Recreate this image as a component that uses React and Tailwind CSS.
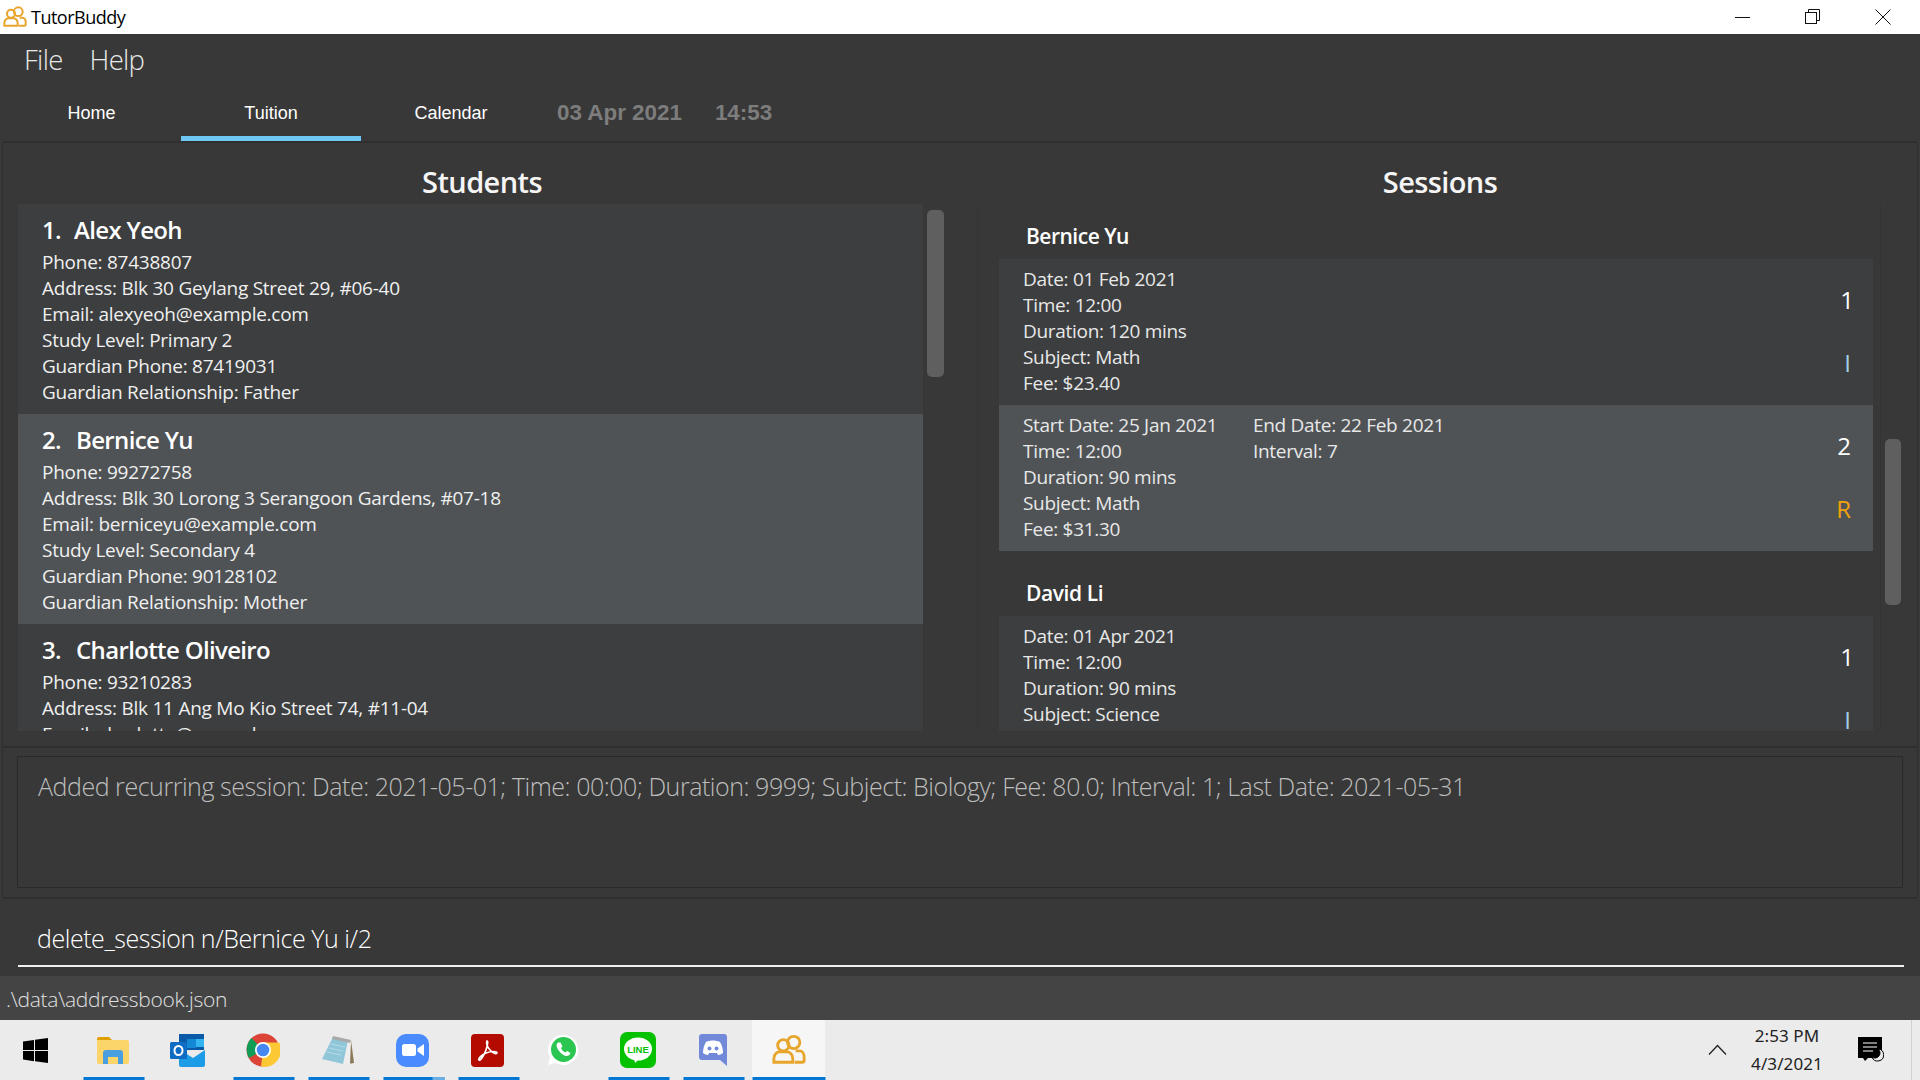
const BASE = "font-['Open_Sans',sans-serif]";

function PeopleIcon({ size = 24 }) {
  return (
    <svg width={size} height={size} viewBox="0 0 36 32" fill="none" stroke="#e8a52c" strokeWidth="3">
      <circle cx="23" cy="8" r="6.500" />
      <circle cx="12" cy="11" r="6" />
      <path d="M2 29v-4c0-4 3-7 6-7h8c3 0 6 3 6 7v4z" />
      <path d="M25 17h4c3 0 5 3 5 6v5c0 1-1 1-2 1h-8" />
    </svg>
  );
}

function StudentCard({ idx, name, lines, selected, numClass }) {
  return (
    <div className={`pl-[24px] pt-[10px] h-[210px] shrink-0 ${selected ? "bg-[#4f5356]" : "bg-[#3c3e3f]"}`}>
      <div className="flex text-[24px] leading-[32px] font-semibold text-white tracking-[-0.65px]">
        <span className={numClass}>{idx}.</span>
        <span>{name}</span>
      </div>
      <div className="text-[19px] leading-[26px] text-[#f0f0f0] tracking-[-0.25px] mt-[3px] whitespace-nowrap">
        {lines.map((l) => (
          <div key={l}>{l}</div>
        ))}
      </div>
    </div>
  );
}

function SessionCard({ n, nClass = "", tag, tagClass, left, right, selected, short }) {
  return (
    <div className={`relative shrink-0 flex pl-[24px] pr-[22px] pt-[7px] ${short ? "h-[130px]" : "h-[146px]"} ${selected ? "bg-[#4f5356]" : "bg-[#3c3e3f]"}`}>
      <div className="text-[19px] leading-[26px] text-[#e8e8e8] tracking-[-0.3px] w-[230px] whitespace-nowrap">
        {left.map((l) => (
          <div key={l}>{l}</div>
        ))}
      </div>
      {right && (
        <div className="text-[19px] leading-[26px] text-[#e8e8e8] tracking-[-0.3px] whitespace-nowrap">
          {right.map((l) => (
            <div key={l}>{l}</div>
          ))}
        </div>
      )}
      <div className="ml-auto flex flex-col items-end">
        <div className={`text-[24px] leading-[32px] text-white mt-[18px] font-medium ${nClass}`}>{n}</div>
        <div className={`text-[24px] leading-[32px] mt-[31px] font-medium ${tagClass}`}>{tag}</div>
      </div>
    </div>
  );
}

function TaskItem({ children, under, active, tail }) {
  return (
    <div className={`relative h-[60px] flex items-center justify-center ${active ? "ml-[1px] w-[73px] bg-[#f6f6f6]" : "w-[75px] pr-[2px]"}`}>
      {children}
      {under && (
        <div className={`absolute bottom-0 left-1/2 -translate-x-1/2 h-[3px] flex ${active ? "w-[73px]" : "w-[61px]"} bg-[#0078d4]`}>
          {tail && <div className="ml-auto w-[12px] h-[3px] bg-[#6aaee6]" />}
        </div>
      )}
    </div>
  );
}

export default function App() {
  return (
    <div className={`w-[1920px] h-[1080px] overflow-hidden flex flex-col bg-[#383838] ${BASE}`}>
      {/* Title bar */}
      <div className="h-[34px] bg-white flex items-center shrink-0">
        <div className="ml-[3px] mr-[4px] flex"><PeopleIcon size={24} /></div>
        <span className="text-[18px] text-black tracking-[-0.5px]">TutorBuddy</span>
        <div className="ml-auto flex items-center h-full">
          <svg width="16" height="16" viewBox="0 0 16 16" className="mr-[54px]" fill="none" stroke="#111" strokeWidth="1"><path d="M0 8.500h15" /></svg>
          <svg width="16" height="16" viewBox="0 0 16 16" className="mr-[54px]" fill="none" stroke="#111" strokeWidth="1"><rect x="0.500" y="3.500" width="11" height="11" /><path d="M3.500 3.500V0.500h11v11h-3" /></svg>
          <svg width="16" height="16" viewBox="0 0 16 16" className="mr-[29px]" fill="none" stroke="#111" strokeWidth="1"><path d="M0.500 0.500l15 15M15.500 0.500l-15 15" /></svg>
        </div>
      </div>

      {/* Menu */}
      <div className="h-[52px] flex items-center pl-[24px] gap-[27px] shrink-0 text-[27.5px] font-light text-[#e8e8e8] tracking-[-0.7px]">
        <span>File</span>
        <span>Help</span>
      </div>

      {/* Tabs */}
      <div className="h-[55px] flex shrink-0 font-['Liberation_Sans',sans-serif]">
        <div className="w-[181px] pl-[2px] pt-[17px] text-center text-[18px] leading-[20px] text-white">Home</div>
        <div className="w-[180px] pt-[17px] text-center text-[18px] leading-[20px] text-white border-b-[5px] border-[#6fc8f3] h-[55px]">Tuition</div>
        <div className="w-[180px] pt-[17px] text-center text-[18px] leading-[20px] text-white">Calendar</div>
        <div className="ml-[16px] pt-[12px] text-[22.4px] leading-[30px] font-bold text-[#7d7d7d]">
          <span>03 Apr 2021</span>
          <span className="ml-[33px]">14:53</span>
        </div>
      </div>

      {/* Main panel */}
      <div className="h-[607px] shrink-0 mx-[2px] border-t-2 border-x border-b-2 border-[#2f2f2f] flex">
        {/* Students */}
        <div className="w-[963px] shrink-0 flex flex-col">
          <div className="h-[61px] pt-[17px] pr-[5px] flex items-center justify-center text-[29px] font-semibold text-[#f5f5f5] tracking-[-0.6px]">Students</div>
          <div className="relative ml-[15px] h-[527px] w-[929px] overflow-hidden">
            <div className="w-[905px] h-full flex flex-col overflow-hidden">
              <StudentCard idx="1" numClass="mr-[13px]" name="Alex Yeoh" lines={["Phone: 87438807", "Address: Blk 30 Geylang Street 29, #06-40", "Email: alexyeoh@example.com", "Study Level: Primary 2", "Guardian Phone: 87419031", "Guardian Relationship: Father"]} />
              <StudentCard selected idx="2" numClass="mr-[15px]" name="Bernice Yu" lines={["Phone: 99272758", "Address: Blk 30 Lorong 3 Serangoon Gardens, #07-18", "Email: berniceyu@example.com", "Study Level: Secondary 4", "Guardian Phone: 90128102", "Guardian Relationship: Mother"]} />
              <StudentCard idx="3" numClass="mr-[15px]" name="Charlotte Oliveiro" lines={["Phone: 93210283", "Address: Blk 11 Ang Mo Kio Street 74, #11-04", "Email: charlotte@example.com"]} />
            </div>
            <div className="absolute left-[909px] top-[6px] w-[17px] h-[167px] rounded-[5px] bg-[#5f5f5f]" />
          </div>
        </div>
        {/* Sessions */}
        <div className="flex-1 flex flex-col min-w-0">
          <div className="h-[61px] pt-[17px] pr-[3px] flex items-center justify-center text-[29px] font-semibold text-[#f5f5f5] tracking-[-0.6px]">Sessions</div>
          <div className="relative h-[527px] overflow-hidden ml-[11px]">
            <div className="pl-[21px] pr-[7px] w-[904px] flex flex-col border-x border-[#343434] h-full">
              <div className="h-[55px] shrink-0 pl-[27px] pt-[18px] text-[21px] leading-[28px] font-semibold text-white tracking-[-0.5px]">Bernice Yu</div>
              <SessionCard n="1" nClass="mr-[-3px]" tag="I" tagClass="text-[#a4cfe4]" left={["Date: 01 Feb 2021", "Time: 12:00", "Duration: 120 mins", "Subject: Math", "Fee: $23.40"]} />
              <SessionCard selected n="2" tag="R" tagClass="text-[#f0a30a]" left={["Start Date: 25 Jan 2021", "Time: 12:00", "Duration: 90 mins", "Subject: Math", "Fee: $31.30"]} right={["End Date: 22 Feb 2021", "Interval: 7"]} />
              <div className="h-[65px] shrink-0 pl-[27px] pt-[28px] text-[21px] leading-[28px] font-semibold text-white tracking-[-0.4px]">David Li</div>
              <SessionCard short n="1" nClass="mr-[-3px]" tag="I" tagClass="text-[#a4cfe4]" left={["Date: 01 Apr 2021", "Time: 12:00", "Duration: 90 mins", "Subject: Science", "Fee: $40.00"]} />
            </div>
            <div className="absolute left-[908px] top-[235px] w-[16px] h-[166px] rounded-[5px] bg-[#5f5f5f]" />
          </div>
        </div>
      </div>

      {/* Result */}
      <div className="h-[151px] shrink-0 mx-[2px] border-x border-b-2 border-[#2f2f2f] pt-[8px] px-[14px]">
        <div className="h-[132px] border border-[#2a2a2a] pl-[20px] pt-[12px] text-[25px] leading-[34px] font-light text-[#bdbdbd] tracking-[-0.46px] whitespace-nowrap">
          Added recurring session: Date: 2021-05-01; Time: 00:00; Duration: 9999; Subject: Biology; Fee: 80.0; Interval: 1; Last Date: 2021-05-31
        </div>
      </div>

      {/* Command */}
      <div className="h-[77px] shrink-0 mx-[2px] pl-[16px] pr-[14px]">
        <div className="h-[68px] border-b-2 border-[#f0f0f0] pl-[19px] pt-[22px] text-[25px] leading-[34px] font-light text-white tracking-[-0.45px]">
          delete_session n/Bernice Yu i/2
        </div>
      </div>

      {/* Status */}
      <div className="h-[44px] shrink-0 bg-[#444444] pl-[6px] pt-[9px] text-[21px] leading-[28px] font-light text-[#e0e0e0] tracking-[-0.3px]">.\data\addressbook.json</div>

      {/* Taskbar */}
      <div className="h-[60px] shrink-0 bg-[#ebebeb] flex items-center">
        <div className="w-[76px] flex justify-center pr-[5px]">
          <svg width="25" height="25" viewBox="0 0 25 25" fill="#000"><path d="M0 3.500l11-1.600V12H0zM12 1.800L25 0v12H12zM0 13h11v10.200L0 21.600zM12 13h13v12l-13-1.800z" /></svg>
        </div>
        <TaskItem under>
          <svg width="32" height="27" viewBox="0 0 32 27"><path d="M0 2a2 2 0 0 1 2-2h10l3 3H0z" fill="#e0a000" /><path d="M0 3h30a2 2 0 0 1 2 2v20a2 2 0 0 1-2 2H2a2 2 0 0 1-2-2z" fill="#fbd46a" /><path d="M6 27V16a3 3 0 0 1 3-3h14a3 3 0 0 1 3 3v11h-5v-7H11v7z" fill="#4a9fe0" /></svg>
        </TaskItem>
        <TaskItem>
          <svg width="36" height="33" viewBox="0 0 36 33"><rect x="9" y="0" width="25" height="16" fill="#0a5aa8" /><rect x="26" y="5" width="8" height="8" fill="#35b5ef" /><rect x="17" y="5" width="9" height="9" fill="#1488d4" /><path d="M9 15l14 9 12-8v15a2 2 0 0 1-2 2H11a2 2 0 0 1-2-2z" fill="#1c9be6" /><rect x="0" y="8" width="17" height="17" rx="1.500" fill="#0f6cc4" /><ellipse cx="8.500" cy="16.500" rx="4" ry="4.600" fill="none" stroke="#fff" strokeWidth="2" /></svg>
        </TaskItem>
        <TaskItem under>
          <svg width="34" height="34" viewBox="0 0 34 34"><circle cx="17" cy="17" r="16.500" fill="#db4437" /><path d="M17 17L3 25A16.500 16.500 0 0 1 5.500 5z" fill="#0f9d58" /><path d="M17 9.500h16A16.500 16.500 0 0 1 15 33.400L17 17z" fill="#fcc934" /><circle cx="17" cy="17" r="8" fill="#fff" /><circle cx="17" cy="17" r="6.300" fill="#4688f1" /></svg>
        </TaskItem>
        <TaskItem under>
          <svg width="34" height="31" viewBox="0 0 34 31">
            <path d="M30 5l3 23-6 1z" fill="#8a7a5a" />
            <path d="M12 1l18 4-1 24-6 1L1 24z" fill="#eeeeee" />
            <path d="M12 2l15 3-5 24L1 24z" fill="#8fc6d8" />
            <path d="M12 1l18 4-1 3-18-4z" fill="#a9a9a9" />
            <path d="M10 9l14 3M8 13l14 3M6 17l14 3" stroke="#b5dce8" strokeWidth="1" />
          </svg>
        </TaskItem>
        <TaskItem under tail>
          <div className="w-[33px] h-[33px] rounded-[10px] bg-[#4a8cff] flex items-center justify-center">
            <svg width="22" height="12" viewBox="0 0 22 12" fill="#fff"><rect x="0" y="0" width="14" height="12" rx="2.500" /><path d="M15.500 4.500L22 0v12l-6.500-4.500z" /></svg>
          </div>
        </TaskItem>
        <TaskItem under>
          <div className="w-[33px] h-[33px] rounded-[4px] bg-[#b30b00] flex items-center justify-center">
            <svg width="22" height="22" viewBox="0 0 22 22" fill="none" stroke="#fff" strokeWidth="1.700"><path d="M10 2c-1 3 1 7 4 10s5 3 6 2c0-2-6-2-11 0s-8 6-7 7 5-4 7-10 2-9 1-9z" /></svg>
          </div>
        </TaskItem>
        <TaskItem>
          <svg width="32" height="32" viewBox="0 0 32 32"><path d="M16 1a15 15 0 0 0-13 22.500L1 31l7.800-2A15 15 0 1 0 16 1z" fill="#fff" /><circle cx="16.500" cy="15.500" r="12.500" fill="#2bc652" /><path d="M11 8.500c-2 1.500-2 4 0 7s5 6 8 6.500c2 .3 4-1 4.500-3l-3.500-2-1.500 1.500c-2-.5-4-3-4.500-4.500l1.500-1.500-2-4z" fill="#fff" /></svg>
        </TaskItem>
        <TaskItem under>
          <div className="w-[36px] h-[36px] rounded-[7px] bg-[#06c100] flex items-center justify-center">
            <svg width="28" height="27" viewBox="0 0 28 27"><ellipse cx="14" cy="12" rx="14" ry="11.500" fill="#fff" /><path d="M10 21l6 0-5 5z" fill="#fff" /><text x="14" y="16" textAnchor="middle" fontSize="9.500" fontWeight="800" fill="#06c100" fontFamily="Liberation Sans">LINE</text></svg>
          </div>
        </TaskItem>
        <TaskItem under>
          <svg width="30" height="32" viewBox="0 0 30 32"><path d="M4 0h22a3 3 0 0 1 3 3v29l-7-6H4a3 3 0 0 1-3-3V3a3 3 0 0 1 3-3z" fill="#7289da" /><path d="M8 8c4-2 10-2 14 0 2 3 3 7 3 11-2 1.500-4 2-5 2l-1-2h-8l-1 2c-1 0-3-.5-5-2 0-4 1-8 3-11z" fill="#fff" /><circle cx="11.500" cy="14.500" r="2" fill="#7289da" /><circle cx="18.500" cy="14.500" r="2" fill="#7289da" /></svg>
        </TaskItem>
        <TaskItem under active>
          <PeopleIcon size={34} />
        </TaskItem>
        <div className="ml-auto flex items-center h-full">
          <svg width="19" height="12" viewBox="0 0 19 12" fill="none" stroke="#222" strokeWidth="1.300" className="mr-[10px] mb-[1px]"><path d="M1 10.500L9.500 1.500L18 10.500" /></svg>
          <div className="w-[100px] text-center text-[17px] leading-[28px] text-[#222] font-['Noto_Sans',sans-serif] tracking-[0.1px]">
            <div>2:53 PM</div>
            <div>4/3/2021</div>
          </div>
          <svg width="26" height="26" viewBox="0 0 26 26" className="ml-[21px] mr-[27px]"><path d="M0 0h24v21H10l-3 3-2-3H0z" fill="#000" /><path d="M5 6h14M5 10h14M5 14h10" stroke="#fff" strokeWidth="1" /><path d="M20 12a6 6 0 1 1-6 8 5 5 0 0 0 6-8z" fill="#ebebeb" stroke="#000" strokeWidth="1" /></svg>
          <div className="w-[1px] h-full bg-[#cfcfcf]" />
          <div className="w-[8px]" />
        </div>
      </div>
    </div>
  );
}
